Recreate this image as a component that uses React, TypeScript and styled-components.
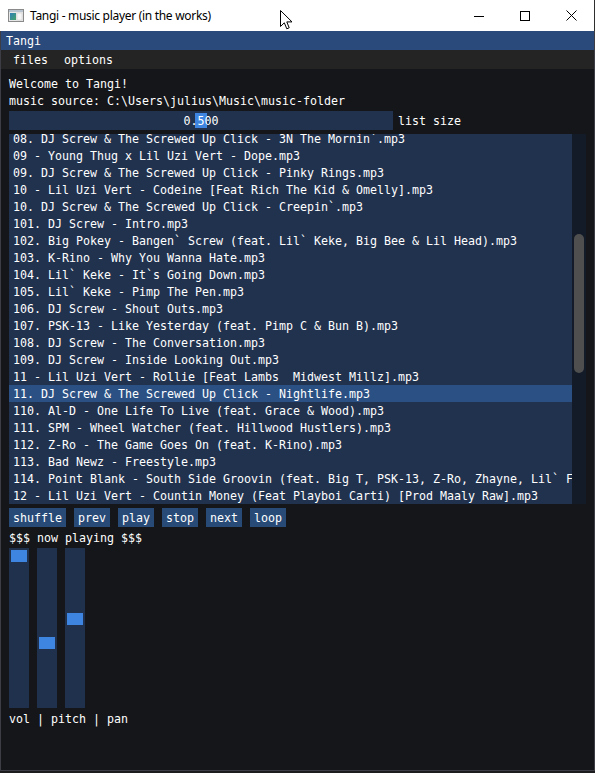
import React from "react";
import styled, { createGlobalStyle } from "styled-components";

const MONO = `"DejaVu Sans Mono", "Liberation Mono", monospace`;

const Global = createGlobalStyle`
  html, body { margin: 0; padding: 0; background: #1c1c1e; }
  body { width: 595px; height: 773px; overflow: hidden; }
  * { box-sizing: border-box; }
`;

const Frame = styled.div`
  width: 595px;
  height: 773px;
  display: flex;
  flex-direction: column;
  position: relative;
  background: #1c1c1e;
`;

const OsBar = styled.div`
  height: 31px;
  flex: none;
  background: #ffffff;
  display: flex;
  align-items: center;
  border-right: 1px solid #2e2e2e;
`;

const OsIcon = styled.div`
  width: 16px;
  height: 13px;
  margin-left: 8px;
  margin-right: 6px;
  display: flex;
`;

const OsTitle = styled.div`
  font-family: "Noto Sans", "Open Sans", sans-serif;
  font-size: 12px;
  color: #000;
  flex: 1;
  letter-spacing: -0.3px;
`;

const Controls = styled.div`
  display: flex;
  height: 31px;
`;

const Ctl = styled.div`
  width: 46px;
  height: 31px;
  display: flex;
  align-items: center;
  justify-content: center;
`;

const Cursor = styled.svg`
  position: absolute;
  left: 280px;
  top: 10px;
`;

const ImWindow = styled.div`
  height: 740px;
  flex: none;
  display: flex;
  flex-direction: column;
  background: #151619;
  border: 1px solid #3c3d45;
  border-top: none;
  font-family: ${MONO};
  font-size: 11.63px;
  color: #ffffff;
`;

const ImTitle = styled.div`
  height: 19px;
  line-height: 20px;
  background: #294a7a;
  padding-left: 5px;
  flex: none;
`;

const MenuBar = styled.div`
  height: 19px;
  background: #242424;
  display: flex;
  gap: 8px;
  padding-left: 8px;
  flex: none;
`;

const MenuItem = styled.div`
  padding: 0 4px;
  line-height: 20px;
`;

const Content = styled.div`
  padding: 8px 8px 0 8px;
  display: flex;
  flex-direction: column;
  gap: 4px;
`;

const Line = styled.div`
  height: 13px;
  line-height: 15px;
  white-space: pre;
`;

const SliderRow = styled.div`
  display: flex;
  align-items: center;
  gap: 5px;
  height: 19px;
`;

const HSlider = styled.div`
  position: relative;
  width: 384px;
  height: 19px;
  background: #21324f;
  display: flex;
  align-items: center;
  justify-content: center;
`;

const HGrab = styled.div`
  position: absolute;
  top: 2px;
  width: 12px;
  height: 15px;
  background: #3d85e0;
`;

const SliderValue = styled.span`
  position: relative;
  line-height: 21px;
  height: 19px;
`;

const ListBox = styled.div`
  height: 370px;
  display: flex;
  background: #21324f;
`;

const Rows = styled.div`
  flex: 1;
  overflow: hidden;
`;

const RowsInner = styled.div`
  margin-top: -4px;
`;

const Row = styled.div<{ $selected?: boolean }>`
  height: 17px;
  line-height: 19px;
  padding-left: 4px;
  white-space: pre;
  overflow: hidden;
  background: ${(p) => (p.$selected ? "#2b5184" : "transparent")};
`;

const ScrollTrack = styled.div`
  width: 14px;
  flex: none;
  background: #131b29;
  padding: 100px 2px 0 2px;
`;

const ScrollThumb = styled.div`
  height: 139px;
  border-radius: 5px;
  background: #4f4f4f;
`;

const ButtonRow = styled.div`
  display: flex;
  gap: 8px;
`;

const Button = styled.div`
  height: 19px;
  line-height: 21px;
  padding: 0 4px;
  background: #284a77;
`;

const VSliders = styled.div`
  display: flex;
  gap: 8px;
`;

const VSlider = styled.div`
  position: relative;
  width: 20px;
  height: 160px;
  background: #20314e;
`;

const VGrab = styled.div`
  position: absolute;
  left: 2px;
  width: 16px;
  height: 12px;
  background: #3d85e0;
`;

const tracks = [
  "08. DJ Screw & The Screwed Up Click - 3N The Mornin`.mp3",
  "09 - Young Thug x Lil Uzi Vert - Dope.mp3",
  "09. DJ Screw & The Screwed Up Click - Pinky Rings.mp3",
  "10 - Lil Uzi Vert - Codeine [Feat Rich The Kid & Omelly].mp3",
  "10. DJ Screw & The Screwed Up Click - Creepin`.mp3",
  "101. DJ Screw - Intro.mp3",
  "102. Big Pokey - Bangen` Screw (feat. Lil` Keke, Big Bee & Lil Head).mp3",
  "103. K-Rino - Why You Wanna Hate.mp3",
  "104. Lil` Keke - It`s Going Down.mp3",
  "105. Lil` Keke - Pimp The Pen.mp3",
  "106. DJ Screw - Shout Outs.mp3",
  "107. PSK-13 - Like Yesterday (feat. Pimp C & Bun B).mp3",
  "108. DJ Screw - The Conversation.mp3",
  "109. DJ Screw - Inside Looking Out.mp3",
  "11 - Lil Uzi Vert - Rollie [Feat Lambs  Midwest Millz].mp3",
  "11. DJ Screw & The Screwed Up Click - Nightlife.mp3",
  "110. Al-D - One Life To Live (feat. Grace & Wood).mp3",
  "111. SPM - Wheel Watcher (feat. Hillwood Hustlers).mp3",
  "112. Z-Ro - The Game Goes On (feat. K-Rino).mp3",
  "113. Bad Newz - Freestyle.mp3",
  "114. Point Blank - South Side Groovin (feat. Big T, PSK-13, Z-Ro, Zhayne, Lil` Flip).mp3",
  "12 - Lil Uzi Vert - Countin Money (Feat Playboi Carti) [Prod Maaly Raw].mp3",
];

const selected = 15;

const listSize = 0.5;
const hTravel = 384 - 4 - 12;

const vSliders = [
  { name: "vol", value: 1.0 },
  { name: "pitch", value: 1 - 87 / 144 },
  { name: "pan", value: 1 - 63 / 144 },
];
const vTravel = 160 - 4 - 12;

export default function App() {
  return (
    <>
      <Global />
      <Frame>
        <OsBar>
          <OsIcon>
            <svg width="16" height="13" viewBox="0 0 16 13">
              <defs>
                <linearGradient id="ig" x1="0" y1="0" x2="1" y2="1">
                  <stop offset="0" stopColor="#2f7fb8" />
                  <stop offset="1" stopColor="#45a36a" />
                </linearGradient>
              </defs>
              <rect x="0.5" y="0.5" width="15" height="12" fill="#e8e8e8" stroke="#8a8a8a" />
              <rect x="1" y="1" width="14" height="2" fill="#b8c4d0" />
              <rect x="2" y="4" width="6" height="7" fill="url(#ig)" />
              <rect x="9" y="4" width="5" height="7" fill="#f6f6f6" stroke="#c8c8c8" strokeWidth="0.5" />
            </svg>
          </OsIcon>
          <OsTitle>Tangi - music player (in the works)</OsTitle>
          <Controls>
            <Ctl>
              <svg width="10" height="10" viewBox="0 0 10 10">
                <path d="M0 5.5 H10" stroke="#000" strokeWidth="1" />
              </svg>
            </Ctl>
            <Ctl>
              <svg width="10" height="10" viewBox="0 0 10 10">
                <rect x="0.5" y="0.5" width="9" height="9" fill="none" stroke="#000" strokeWidth="1" />
              </svg>
            </Ctl>
            <Ctl>
              <svg width="11" height="11" viewBox="0 0 11 11">
                <path d="M0.5 0.5 L10.5 10.5 M10.5 0.5 L0.5 10.5" stroke="#000" strokeWidth="1" />
              </svg>
            </Ctl>
          </Controls>
        </OsBar>
        <ImWindow>
          <ImTitle>Tangi</ImTitle>
          <MenuBar>
            <MenuItem>files</MenuItem>
            <MenuItem>options</MenuItem>
          </MenuBar>
          <Content>
            <Line>Welcome to Tangi!</Line>
            <Line>music source: C:\Users\julius\Music\music-folder</Line>
            <SliderRow>
              <HSlider>
                <HGrab style={{ left: 2 + listSize * hTravel }} />
                <SliderValue>0.500</SliderValue>
              </HSlider>
              <Line>list size</Line>
            </SliderRow>
            <ListBox>
              <Rows>
                <RowsInner>
                  {tracks.map((t, i) => (
                    <Row key={i} $selected={i === selected}>
                      {t}
                    </Row>
                  ))}
                </RowsInner>
              </Rows>
              <ScrollTrack>
                <ScrollThumb />
              </ScrollTrack>
            </ListBox>
            <ButtonRow>
              {["shuffle", "prev", "play", "stop", "next", "loop"].map((b) => (
                <Button key={b}>{b}</Button>
              ))}
            </ButtonRow>
            <Line>$$$ now playing $$$</Line>
            <VSliders>
              {vSliders.map((s) => (
                <VSlider key={s.name}>
                  <VGrab style={{ top: 2 + (1 - s.value) * vTravel }} />
                </VSlider>
              ))}
            </VSliders>
            <Line>vol | pitch | pan</Line>
          </Content>
        </ImWindow>
        <Cursor width="14" height="21" viewBox="0 0 14 21">
          <path
            d="M0.5 0.5 L0.5 16.5 L4.3 12.8 L6.8 18.8 L9.2 17.8 L6.8 11.9 L12 11.9 Z"
            fill="#fff"
            stroke="#000"
            strokeWidth="1"
            strokeLinejoin="miter"
          />
        </Cursor>
      </Frame>
    </>
  );
}
